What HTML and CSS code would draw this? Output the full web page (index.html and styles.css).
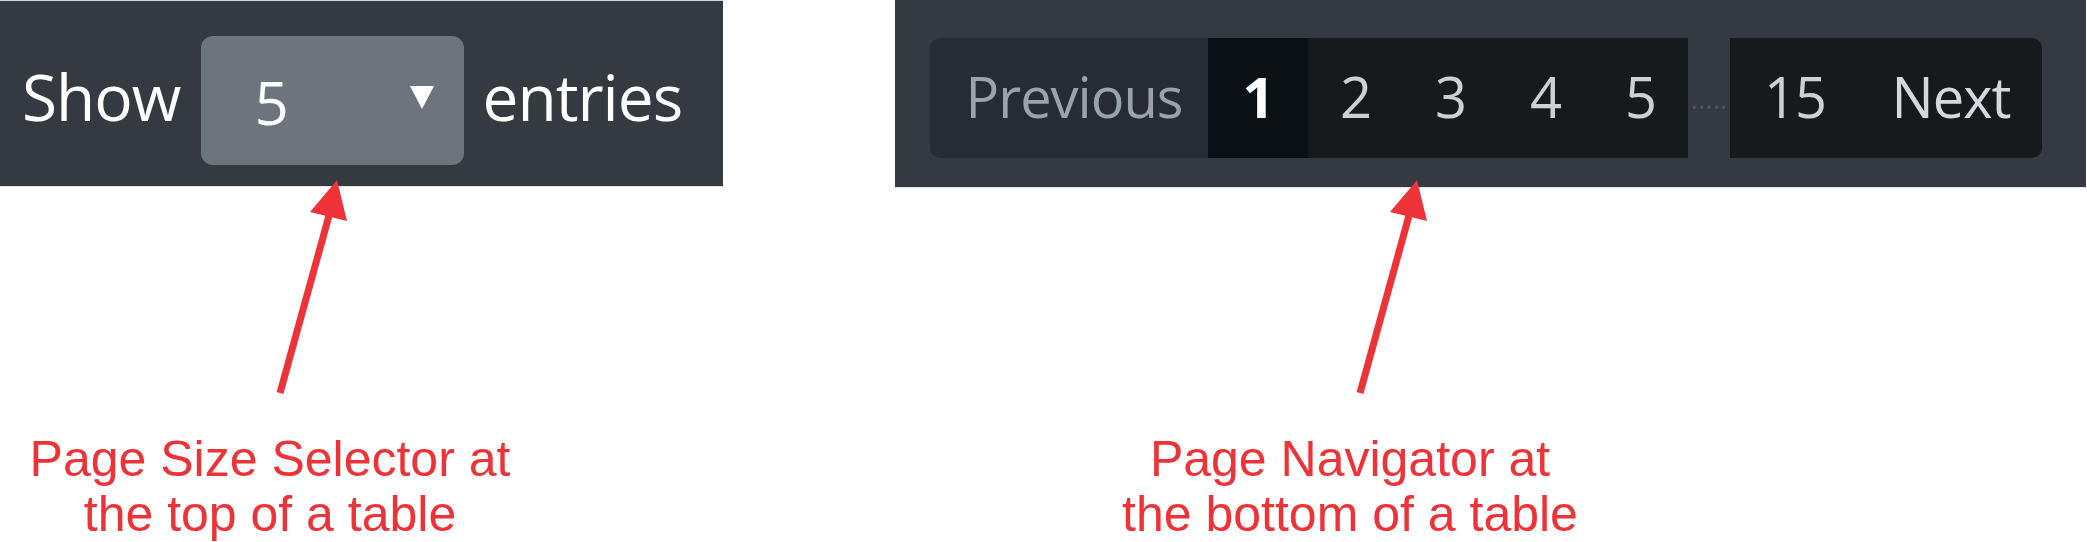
FILE: index.html
```html
<!DOCTYPE html>
<html lang="en">
<head>
<meta charset="utf-8">
<title>Page size selector and page navigator</title>
<link rel="stylesheet" href="styles.css">
</head>
<body>
<div class="panels">
  <div class="size-panel">
    <span class="label">Show</span>
    <div class="select">
      <span class="select-value">5</span>
      <svg class="caret" width="26" height="25" viewBox="0 0 26 25"><polygon points="1,1 25,1 13,24" fill="#ffffff"/></svg>
    </div>
    <span class="label">entries</span>
  </div>
  <div class="nav-panel">
    <div class="pager">
      <span class="page prev">Previous</span>
      <span class="page active">1</span>
      <span class="page num">2</span>
      <span class="page num">3</span>
      <span class="page num">4</span>
      <span class="page num">5</span>
      <span class="ellipsis">.....</span>
      <span class="page last">15</span>
      <span class="page next">Next</span>
    </div>
  </div>
</div>
<div class="notes">
  <p class="note note-left">Page Size Selector at<br>the top of a table</p>
  <p class="note note-right">Page Navigator at<br>the bottom of a table</p>
</div>
<svg class="arrows" width="2087" height="542" viewBox="0 0 2087 542">
  <g fill="#ee3338" stroke="none">
    <line x1="280" y1="393" x2="330" y2="212" stroke="#ee3338" stroke-width="7"/>
    <polygon points="337,180 310,212 347,221"/>
    <line x1="1360" y1="393" x2="1410" y2="212" stroke="#ee3338" stroke-width="7"/>
    <polygon points="1417,180 1390,212 1427,221"/>
  </g>
</svg>
</body>
</html>
```
FILE: styles.css
```css
* { box-sizing: border-box; }

html, body {
  margin: 0;
  padding: 0;
}

body {
  width: 2087px;
  height: 542px;
  position: relative;
  overflow: hidden;
  background: #ffffff;
  font-family: "Open Sans", "Noto Sans", sans-serif;
}

.panels {
  display: flex;
  align-items: flex-start;
}

.size-panel {
  width: 723px;
  height: 187px;
  background: #343a40;
  border-top: 1px solid #d4d6d8;
  border-bottom: 1px solid #e2e3e5;
  display: flex;
  align-items: center;
  padding: 14px 0 0 22px;
}

.label {
  color: #ffffff;
  font-size: 64px;
  letter-spacing: -1px;
  line-height: 1;
  margin-top: -8px;
}

.select {
  width: 263px;
  height: 129px;
  margin: 0 18px 0 21px;
  background: #6c757d;
  border-radius: 12px;
  display: flex;
  align-items: center;
  justify-content: space-between;
  padding: 0 29px 0 53px;
}

.select-value {
  color: #ffffff;
  font-size: 60px;
  line-height: 1;
  margin-top: 2px;
}

.caret {
  display: block;
  margin-bottom: 6px;
}

.nav-panel {
  width: 1191px;
  height: 188px;
  margin-left: 172px;
  background: #343a40;
  border-bottom: 1px solid #e2e3e5;
  display: flex;
  align-items: center;
  padding: 9px 0 0 35px;
}

.pager {
  display: flex;
  align-items: stretch;
  height: 120px;
}

.page {
  display: flex;
  align-items: center;
  justify-content: center;
  font-size: 56px;
  letter-spacing: -1px;
  line-height: 1;
  color: #cdd1d5;
  background: #171a1d;
  padding-bottom: 4px;
}

.prev {
  width: 278px;
  background: #272c33;
  color: #9aa2aa;
  border-radius: 10px 0 0 10px;
  padding-left: 10px;
}

.active {
  width: 100px;
  background: #0a1013;
  color: #ffffff;
  font-weight: 700;
}

.num {
  width: 95px;
}

.ellipsis {
  width: 42px;
  display: flex;
  align-items: center;
  justify-content: center;
  color: #50565d;
  font-size: 28px;
  line-height: 1;
}

.last {
  width: 130px;
}

.next {
  width: 182px;
  color: #d5d9dd;
  border-radius: 0 10px 10px 0;
}

.notes {
  display: flex;
  margin-top: 244px;
}

.note {
  margin: 0;
  color: #ee3338;
  font-family: "Liberation Sans", Arial, sans-serif;
  font-size: 50px;
  line-height: 55px;
  text-align: center;
}

.note-left {
  width: 540px;
}

.note-right {
  width: 1080px;
  margin-left: 270px;
}

.arrows {
  position: absolute;
  top: 0;
  left: 0;
  pointer-events: none;
}
```
